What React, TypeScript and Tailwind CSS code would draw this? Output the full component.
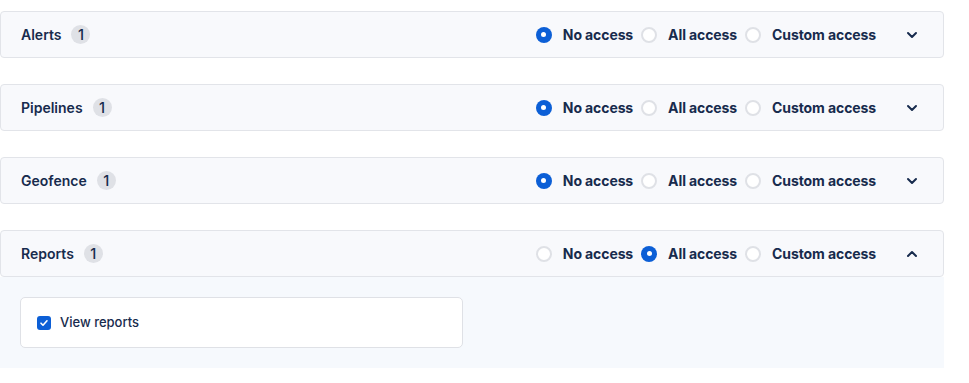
import React from 'react';

type Access = 'none' | 'all' | 'custom';

interface Section {
  name: string;
  count: number;
  access: Access;
  open?: boolean;
}

const sections: Section[] = [
  { name: 'Alerts', count: 1, access: 'none' },
  { name: 'Pipelines', count: 1, access: 'none' },
  { name: 'Geofence', count: 1, access: 'none' },
  { name: 'Reports', count: 1, access: 'all', open: true },
];

const options: { key: Access; label: string }[] = [
  { key: 'none', label: 'No access' },
  { key: 'all', label: 'All access' },
  { key: 'custom', label: 'Custom access' },
];

const Radio: React.FC<{ checked: boolean }> = ({ checked }) =>
  checked ? (
    <span className="flex h-4 w-4 items-center justify-center rounded-full bg-[#0c5fd6]">
      <span className="h-[5px] w-[5px] rounded-full bg-white" />
    </span>
  ) : (
    <span className="h-4 w-4 rounded-full border-2 border-[#dfe1e6] bg-white" />
  );

const Chevron: React.FC<{ up?: boolean }> = ({ up }) => (
  <svg width="20" height="20" viewBox="0 0 20 20" fill="none" className="text-[#172b4d]">
    <path
      d={up ? 'M6 12l4-4 4 4' : 'M6 8l4 4 4-4'}
      stroke="currentColor"
      strokeWidth="2"
      strokeLinecap="round"
      strokeLinejoin="round"
    />
  </svg>
);

export default function App() {
  return (
    <div className="min-h-screen bg-white pt-[11px] pr-[25px] font-['Inter',sans-serif] text-[#172b4d]">
      <div className="flex flex-col gap-[26px]">
        {sections.map((s) => (
          <div key={s.name}>
            <div className="flex h-[47px] items-center rounded-[4px] border border-[#e2e4e9] bg-[#f8f9fc] pl-5 pr-[21px]">
              <span className="text-sm font-semibold">{s.name}</span>
              <span className="ml-2.5 flex h-[19px] min-w-[19px] items-center justify-center rounded-full bg-[#dfe1e6] px-1 text-[14.5px] font-medium">
                {s.count}
              </span>
              <div className="ml-auto flex items-center">
                {options.map((o) => (
                  <label key={o.key} className="mr-[8px] flex items-center gap-[11px] last:mr-0">
                    <Radio checked={s.access === o.key} />
                    <span className="text-sm font-bold tracking-[-0.1px]">{o.label}</span>
                  </label>
                ))}
                <span className="ml-[18px]">
                  <Chevron up={s.open} />
                </span>
              </div>
            </div>
            {s.open && (
              <div className="bg-[#f6f9fd] px-5 pt-[20px] pb-[20px]">
                <div className="flex h-[51px] w-[443px] items-center gap-[9px] rounded-[5px] border border-[#dfe1e6] bg-white pl-4">
                  <span className="flex h-[14px] w-[14px] items-center justify-center rounded-[3px] bg-[#0c5fd6]">
                    <svg width="10" height="10" viewBox="0 0 10 10" fill="none">
                      <path d="M2 5.2l2 2 4-4.4" stroke="white" strokeWidth="1.6" strokeLinecap="round" strokeLinejoin="round" />
                    </svg>
                  </span>
                  <span className="text-[13px] font-medium">View reports</span>
                </div>
              </div>
            )}
          </div>
        ))}
      </div>
    </div>
  );
}
